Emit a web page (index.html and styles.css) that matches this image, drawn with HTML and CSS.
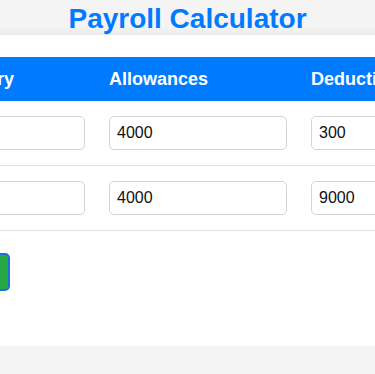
FILE: index.html
```html
<!DOCTYPE html>
<html lang="en">
<head>
    <meta charset="UTF-8">
    <meta name="viewport" content="width=device-width, initial-scale=1.0">
    <title>Payroll Calculator</title>
    <link rel="stylesheet" href="styles.css">
</head>
<body>
    <h1>Payroll Calculator</h1>
    <div class="container">
        <table class="payroll-table">
            <colgroup>
                <col class="col-name">
                <col class="col-num">
                <col class="col-num">
                <col class="col-num">
                <col class="col-net">
            </colgroup>
            <thead>
                <tr>
                    <th>Employee</th>
                    <th>Basic Salary</th>
                    <th>Allowances</th>
                    <th>Deductions</th>
                    <th>Net Salary</th>
                </tr>
            </thead>
            <tbody>
                <tr>
                    <td><input type="text" value="John Doe"></td>
                    <td><input type="number" value="25000"></td>
                    <td><input type="number" value="4000"></td>
                    <td><input type="number" value="300"></td>
                    <td class="net">28700</td>
                </tr>
                <tr>
                    <td><input type="text" value="Jane Smith"></td>
                    <td><input type="number" value="30000"></td>
                    <td><input type="number" value="4000"></td>
                    <td><input type="number" value="9000"></td>
                    <td class="net">25000</td>
                </tr>
            </tbody>
        </table>
        <div class="actions">
            <button class="add-button">Add Employee</button>
            <button class="calc-button">Calculate</button>
        </div>
        <div class="result"></div>
    </div>
</body>
</html>
```

FILE: styles.css
```css
body {
    background-color: #f4f4f4;
    font-family: "Liberation Sans", Arial, sans-serif;
    margin: 0;
    padding: 3px 0 0;
    display: flex;
    flex-direction: column;
    align-items: center;
    overflow-x: hidden;
}
h1 {
    color: #007bff;
    font-size: 28px;
    line-height: 31px;
    margin: 0 0 1px;
    text-align: center;
}
.container {
    width: 947px;
    flex-shrink: 0;
    background-color: white;
    padding: 22px 20px 20px;
    box-shadow: 0 0 10px rgba(0, 0, 0, 0.1);
    border-radius: 8px;
}
.payroll-table {
    width: 947px;
    table-layout: fixed;
    border-collapse: collapse;
}
.col-name {
    width: 181px;
}
.col-num {
    width: 202px;
}
.col-net {
    width: 160px;
}
th {
    background-color: #007bff;
    color: white;
    font-size: 18px;
    line-height: 20px;
    text-align: left;
    padding: 12px;
}
td {
    padding: 15px 12px;
    border-bottom: 1px solid #e2e2e2;
}
input {
    font-family: "Liberation Sans", Arial, sans-serif;
    font-size: 16px;
    width: 100%;
    height: 34px;
    box-sizing: border-box;
    padding: 6px 7px;
    border: 1px solid #d4d4d4;
    border-radius: 5px;
    color: #111;
}
.actions {
    display: flex;
    gap: 10px;
    margin-top: 22px;
}
button {
    font-family: "Liberation Sans", Arial, sans-serif;
    font-size: 16px;
    line-height: 18px;
    color: white;
    padding: 8px 12px;
    border-radius: 5px;
    white-space: nowrap;
    cursor: pointer;
}
.add-button {
    width: 140px;
    background-color: #007bff;
    border: 2px solid #007bff;
}
.calc-button {
    width: 146px;
    background-color: #28a745;
    border: 2px solid #1f6fd6;
}
.result {
    margin-top: 15px;
    min-height: 20px;
}
```
